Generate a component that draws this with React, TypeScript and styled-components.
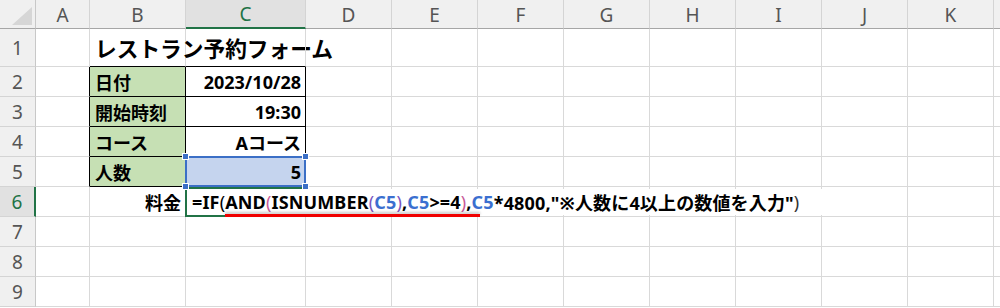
import React from 'react';
import styled, { createGlobalStyle } from 'styled-components';

const GlobalStyle = createGlobalStyle`
  html, body { margin: 0; padding: 0; background: #fff; }
  body { font-family: "Noto Sans", "Noto Sans CJK JP", sans-serif; }
`;

const GRID = '#d9d9d9';
const INK = '#000';
const GREEN = '#217346';

const COLS = ['A', 'B', 'C', 'D', 'E', 'F', 'G', 'H', 'I', 'J', 'K', 'L'];
const ROWS = [1, 2, 3, 4, 5, 6, 7, 8, 9];

const Sheet = styled.div`
  display: grid;
  grid-template-columns: 36px 54px 96px 120px repeat(8, 86px) 1fr;
  grid-template-rows: 29px 38px repeat(8, 30px);
  width: 1000px;
  height: 308px;
  overflow: hidden;
`;

const Corner = styled.div`
  box-sizing: border-box;
  background: #f0f0f0;
  border-right: 1px solid #c8c8c8;
  border-bottom: 1px solid #a6a6a6;
  display: flex;
  align-items: flex-end;
  justify-content: flex-end;
  padding: 0 3px 3px 0;
`;

const ColHead = styled.div<{ $active?: boolean }>`
  box-sizing: border-box;
  background: ${p => (p.$active ? '#e1e1e1' : '#f0f0f0')};
  border-right: 1px solid #d4d4d4;
  border-bottom: ${p => (p.$active ? `2px solid ${GREEN}` : '1px solid #a6a6a6')};
  color: ${p => (p.$active ? GREEN : '#555')};
  font-size: 19px;
  font-weight: 400;
  display: flex;
  align-items: center;
  justify-content: center;
  padding-top: 1px;
`;

const RowHead = styled.div<{ $active?: boolean }>`
  box-sizing: border-box;
  background: ${p => (p.$active ? '#e1e1e1' : '#f0f0f0')};
  border-right: ${p => (p.$active ? `2px solid ${GREEN}` : '1px solid #c8c8c8')};
  border-bottom: 1px solid #d4d4d4;
  color: ${p => (p.$active ? GREEN : '#555')};
  font-size: 19px;
  font-weight: 400;
  display: flex;
  align-items: center;
  justify-content: center;
`;

const Cell = styled.div<{ $right: string; $bottom: string; $bg?: string; $align?: 'left' | 'right' }>`
  box-sizing: border-box;
  position: relative;
  border-right: 1px solid ${p => p.$right};
  border-bottom: 1px solid ${p => p.$bottom};
  background: ${p => p.$bg || 'transparent'};
  display: flex;
  align-items: center;
  justify-content: ${p => (p.$align === 'right' ? 'flex-end' : 'flex-start')};
  padding: 0 4px 0 5px;
  white-space: nowrap;
  overflow: visible;
  font-size: 18px;
  font-weight: 700;
  color: #000;
`;

const Title = styled.span`
  font-size: 21.7px;
  font-weight: 700;
`;

const Selection = styled.div`
  position: absolute;
  top: -1px;
  left: -1px;
  right: -1px;
  bottom: -1px;
  border: 2px solid #3b6fc6;
  pointer-events: none;
  z-index: 2;
`;

const Handle = styled.span<{ $x: 'left' | 'right'; $y: 'top' | 'bottom' }>`
  position: absolute;
  width: 5px;
  height: 5px;
  background: #3b6fc6;
  border: 1px solid #fff;
  ${p => p.$x}: -5px;
  ${p => p.$y}: -5px;
`;

const ActiveFrame = styled.div`
  position: absolute;
  top: 0;
  left: -1px;
  right: -1px;
  bottom: -1px;
  border: 2px solid ${GREEN};
  z-index: 1;
`;

const Editor = styled.div`
  position: absolute;
  top: 2px;
  left: 1px;
  width: 640px;
  height: 26px;
  background: #fff;
  z-index: 3;
  display: flex;
  align-items: center;
  padding-left: 5px;
  box-sizing: border-box;
  font-size: 18px;
  font-weight: 700;
  letter-spacing: 0.15px;
  white-space: nowrap;
`;

const Tok = styled.span<{ $c?: string; $thin?: boolean }>`
  color: ${p => p.$c || '#000'};
  font-weight: ${p => (p.$thin ? 400 : 700)};
`;

const Underline = styled.div`
  position: absolute;
  left: 38px;
  top: 25px;
  width: 255px;
  height: 3px;
  background: #f00000;
  box-shadow: 0 -2px 3px rgba(0, 0, 0, 0.22);
`;

const REF = '#3b6fd0';
const PINK = '#c85a98';
const PURPLE = '#7b55c0';

function Formula() {
  return (
    <Editor>
      <Tok>=IF</Tok>
      <Tok $thin>(</Tok>
      <Tok>AND</Tok>
      <Tok $c={PINK} $thin>(</Tok>
      <Tok>ISNUMBER</Tok>
      <Tok $c={PURPLE} $thin>(</Tok>
      <Tok $c={REF}>C5</Tok>
      <Tok $c={PURPLE} $thin>)</Tok>
      <Tok>,</Tok>
      <Tok $c={REF}>C5</Tok>
      <Tok>&gt;=4</Tok>
      <Tok $c={PINK} $thin>)</Tok>
      <Tok>,</Tok>
      <Tok $c={REF}>C5</Tok>
      <Tok>*4800,"※人数に4以上の数値を入力"</Tok>
      <Tok $c="#333" $thin>)</Tok>
      <Underline />
    </Editor>
  );
}

const TABLE: Record<string, string> = {
  B2: '日付',
  C2: '2023/10/28',
  B3: '開始時刻',
  C3: '19:30',
  B4: 'コース',
  C4: 'Aコース',
  B5: '人数',
  C5: '5',
  B6: '料金',
};

function rightColor(col: string, row: number) {
  if (row >= 2 && row <= 5 && (col === 'A' || col === 'B' || col === 'C')) return INK;
  return GRID;
}

function bottomColor(col: string, row: number) {
  if (row >= 1 && row <= 5 && (col === 'B' || col === 'C')) return INK;
  return GRID;
}

function cellBg(col: string, row: number) {
  if (col === 'B' && row >= 2 && row <= 5) return '#c6e0b4';
  if (col === 'C' && row === 5) return '#c5d4ee';
  return undefined;
}

export default function App() {
  return (
    <>
      <GlobalStyle />
      <Sheet>
        <Corner>
          <svg width="20" height="18" viewBox="0 0 20 18">
            <polygon points="20,0 20,18 0,18" fill="#d6d6d6" />
          </svg>
        </Corner>
        {COLS.map(c => (
          <ColHead key={c} $active={c === 'C'}>
            {c === 'L' ? '' : c}
          </ColHead>
        ))}
        {ROWS.map(r => (
          <React.Fragment key={r}>
            <RowHead $active={r === 6}>{r}</RowHead>
            {COLS.map(c => {
              const id = `${c}${r}`;
              const right = c === 'C' || id === 'B6';
              return (
                <Cell
                  key={id}
                  $right={rightColor(c, r)}
                  $bottom={bottomColor(c, r)}
                  $bg={cellBg(c, r)}
                  $align={right ? 'right' : 'left'}
                >
                  {id === 'B1' && <Title>レストラン予約フォーム</Title>}
                  {TABLE[id]}
                  {id === 'C5' && (
                    <Selection>
                      <Handle $x="left" $y="top" />
                      <Handle $x="right" $y="top" />
                      <Handle $x="left" $y="bottom" />
                      <Handle $x="right" $y="bottom" />
                    </Selection>
                  )}
                  {id === 'C6' && (
                    <>
                      <ActiveFrame />
                      <Formula />
                    </>
                  )}
                </Cell>
              );
            })}
          </React.Fragment>
        ))}
      </Sheet>
    </>
  );
}
